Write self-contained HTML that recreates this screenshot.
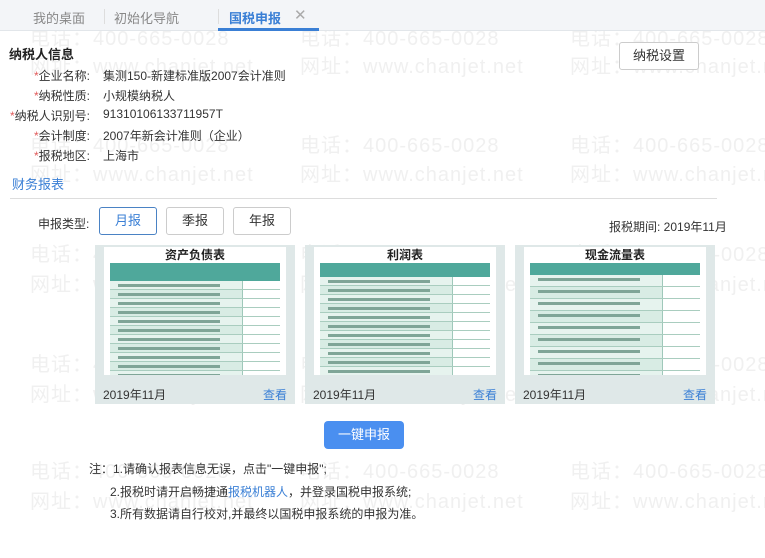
<!DOCTYPE html>
<html><head><meta charset="utf-8"><style>
*{margin:0;padding:0;box-sizing:border-box}
body{width:765px;height:558px;background:#fff;font-family:"Liberation Sans","Noto Sans CJK SC",sans-serif;font-size:12px;color:#333;position:relative;overflow:hidden}
.wm{position:absolute;color:#f0f0f0;font-size:20px;white-space:nowrap;letter-spacing:1px;z-index:0}
.a{position:absolute;z-index:1}
.tabs{position:absolute;left:0;top:0;width:765px;height:31px;background:#f3f5f8;border-bottom:1px solid #e2e6ea}
.tab{position:absolute;top:8px;font-size:13px;color:#888}
.btn{position:absolute;border:1px solid #ccc;border-radius:3px;background:#fff;text-align:center;font-size:13px;color:#333}
.card{position:absolute;top:245px;width:200px;height:159px;background:#dfe8e8}
.img{position:absolute;left:9px;top:2px;width:182px;height:128px;background:#fff;overflow:hidden}
.ttl{text-align:center;font-weight:bold;font-size:12px;color:#222;height:16px;line-height:16px}
.hd{background:#4fa89b;height:14px;margin:0 6px}
.row{height:9px;margin:0 6px;background:#d8ece4;border-bottom:1px solid #a9cdbf;position:relative}
.row:nth-child(odd){background:#e6f3ee}
.row i{position:absolute;right:0;top:0;width:38px;height:8px;background:#fff;border-left:1px solid #9fc8ba}
.row s{position:absolute;left:8px;top:3px;width:60%;height:3px;background:#7fa597}
.date{position:absolute;left:8px;top:141px;font-size:12px;color:#333}
.view{position:absolute;right:8px;top:141px;font-size:12px;color:#3a7fd5}
.lbl{position:absolute;width:90px;text-align:right;font-size:12px;color:#333}
.lbl b{color:#e05b5b;font-weight:normal}
.val{position:absolute;left:103px;font-size:12px;color:#333}
</style></head><body>
<div class="wm" style="left:30px;top:22px">电话：400-665-0028</div>
<div class="wm" style="left:30px;top:50px">网址：www.chanjet.net</div>
<div class="wm" style="left:300px;top:22px">电话：400-665-0028</div>
<div class="wm" style="left:300px;top:50px">网址：www.chanjet.net</div>
<div class="wm" style="left:570px;top:22px">电话：400-665-0028</div>
<div class="wm" style="left:570px;top:50px">网址：www.chanjet.net</div>
<div class="wm" style="left:30px;top:129px">电话：400-665-0028</div>
<div class="wm" style="left:30px;top:158px">网址：www.chanjet.net</div>
<div class="wm" style="left:300px;top:129px">电话：400-665-0028</div>
<div class="wm" style="left:300px;top:158px">网址：www.chanjet.net</div>
<div class="wm" style="left:570px;top:129px">电话：400-665-0028</div>
<div class="wm" style="left:570px;top:158px">网址：www.chanjet.net</div>
<div class="wm" style="left:30px;top:238px">电话：400-665-0028</div>
<div class="wm" style="left:30px;top:268px">网址：www.chanjet.net</div>
<div class="wm" style="left:300px;top:238px">电话：400-665-0028</div>
<div class="wm" style="left:300px;top:268px">网址：www.chanjet.net</div>
<div class="wm" style="left:570px;top:238px">电话：400-665-0028</div>
<div class="wm" style="left:570px;top:268px">网址：www.chanjet.net</div>
<div class="wm" style="left:30px;top:348px">电话：400-665-0028</div>
<div class="wm" style="left:30px;top:378px">网址：www.chanjet.net</div>
<div class="wm" style="left:300px;top:348px">电话：400-665-0028</div>
<div class="wm" style="left:300px;top:378px">网址：www.chanjet.net</div>
<div class="wm" style="left:570px;top:348px">电话：400-665-0028</div>
<div class="wm" style="left:570px;top:378px">网址：www.chanjet.net</div>
<div class="wm" style="left:30px;top:455px">电话：400-665-0028</div>
<div class="wm" style="left:30px;top:485px">网址：www.chanjet.net</div>
<div class="wm" style="left:300px;top:455px">电话：400-665-0028</div>
<div class="wm" style="left:300px;top:485px">网址：www.chanjet.net</div>
<div class="wm" style="left:570px;top:455px">电话：400-665-0028</div>
<div class="wm" style="left:570px;top:485px">网址：www.chanjet.net</div>

<div class="tabs a">
<span class="tab" style="left:33px">我的桌面</span>
<span style="position:absolute;left:104px;top:9px;width:1px;height:15px;background:#ddd"></span>
<span class="tab" style="left:114px">初始化导航</span>
<span style="position:absolute;left:218px;top:9px;width:1px;height:15px;background:#ddd"></span>
<span class="tab" style="left:229px;color:#3a7fd5;font-weight:bold">国税申报</span>
<span class="tab" style="left:294px;color:#aaa;font-size:15px;top:6px">✕</span>
<span style="position:absolute;left:218px;top:28px;width:101px;height:3px;background:#3a7fd5"></span>
</div>

<div class="a" style="left:9px;top:44px;font-size:13px;font-weight:bold;color:#222">纳税人信息</div>
<div class="btn a" style="left:619px;top:42px;width:80px;height:28px;line-height:26px">纳税设置</div>
<div class="lbl a" style="top:67px"><b>*</b>企业名称:</div><div class="val a" style="top:67px">集测150-新建标准版2007会计准则</div>
<div class="lbl a" style="top:87px"><b>*</b>纳税性质:</div><div class="val a" style="top:87px">小规模纳税人</div>
<div class="lbl a" style="top:107px"><b>*</b>纳税人识别号:</div><div class="val a" style="top:107px">91310106133711957T</div>
<div class="lbl a" style="top:127px"><b>*</b>会计制度:</div><div class="val a" style="top:127px">2007年新会计准则（企业）</div>
<div class="lbl a" style="top:147px"><b>*</b>报税地区:</div><div class="val a" style="top:147px">上海市</div>
<div class="a" style="left:12px;top:174px;font-size:13px;color:#3a7fd5">财务报表</div>
<div class="a" style="left:10px;top:198px;width:707px;height:1px;background:#ddd"></div>

<div class="a" style="left:38px;top:215px">申报类型:</div>
<div class="btn a" style="left:99px;top:207px;width:58px;height:28px;line-height:26px;border-color:#4a82c4;color:#3a7fd5">月报</div>
<div class="btn a" style="left:166px;top:207px;width:58px;height:28px;line-height:26px">季报</div>
<div class="btn a" style="left:233px;top:207px;width:58px;height:28px;line-height:26px">年报</div>
<div class="a" style="left:609px;top:218px">报税期间: 2019年11月</div>

<div class="card a" style="left:95px"><div class="img"><div class="ttl">资产负债表</div><div class="hd" style="height:18px"></div>
<div class="row"><s></s><i></i></div><div class="row"><s></s><i></i></div><div class="row"><s></s><i></i></div><div class="row"><s></s><i></i></div><div class="row"><s></s><i></i></div><div class="row"><s></s><i></i></div><div class="row"><s></s><i></i></div><div class="row"><s></s><i></i></div><div class="row"><s></s><i></i></div><div class="row"><s></s><i></i></div><div class="row"><s></s><i></i></div><div class="row"><s></s><i></i></div></div>
<div class="date">2019年11月</div><div class="view">查看</div></div>
<div class="card a" style="left:305px"><div class="img"><div class="ttl">利润表</div><div class="hd"></div>
<div class="row"><s></s><i></i></div><div class="row"><s></s><i></i></div><div class="row"><s></s><i></i></div><div class="row"><s></s><i></i></div><div class="row"><s></s><i></i></div><div class="row"><s></s><i></i></div><div class="row"><s></s><i></i></div><div class="row"><s></s><i></i></div><div class="row"><s></s><i></i></div><div class="row"><s></s><i></i></div><div class="row"><s></s><i></i></div><div class="row"><s></s><i></i></div></div>
<div class="date">2019年11月</div><div class="view">查看</div></div>
<div class="card a" style="left:515px"><div class="img"><div class="ttl">现金流量表</div><div class="hd" style="height:12px"></div>
<div class="row" style="height:12px"><s></s><i style="height:11px"></i></div><div class="row" style="height:12px"><s></s><i style="height:11px"></i></div><div class="row" style="height:12px"><s></s><i style="height:11px"></i></div><div class="row" style="height:12px"><s></s><i style="height:11px"></i></div><div class="row" style="height:12px"><s></s><i style="height:11px"></i></div><div class="row" style="height:12px"><s></s><i style="height:11px"></i></div><div class="row" style="height:12px"><s></s><i style="height:11px"></i></div><div class="row" style="height:12px"><s></s><i style="height:11px"></i></div><div class="row" style="height:12px"><s></s><i style="height:11px"></i></div></div>
<div class="date">2019年11月</div><div class="view">查看</div></div>

<div class="a" style="left:324px;top:421px;width:80px;height:28px;line-height:28px;background:#4a8ff0;color:#fff;text-align:center;border-radius:4px;font-size:13px">一键申报</div>
<div class="a" style="left:89px;top:460px">注：1.请确认报表信息无误，点击"一键申报";</div>
<div class="a" style="left:110px;top:483px">2.报税时请开启畅捷通<span style="color:#3a7fd5">报税机器人</span>，并登录国税申报系统;</div>
<div class="a" style="left:110px;top:505px">3.所有数据请自行校对,并最终以国税申报系统的申报为准。</div>
</body></html>
